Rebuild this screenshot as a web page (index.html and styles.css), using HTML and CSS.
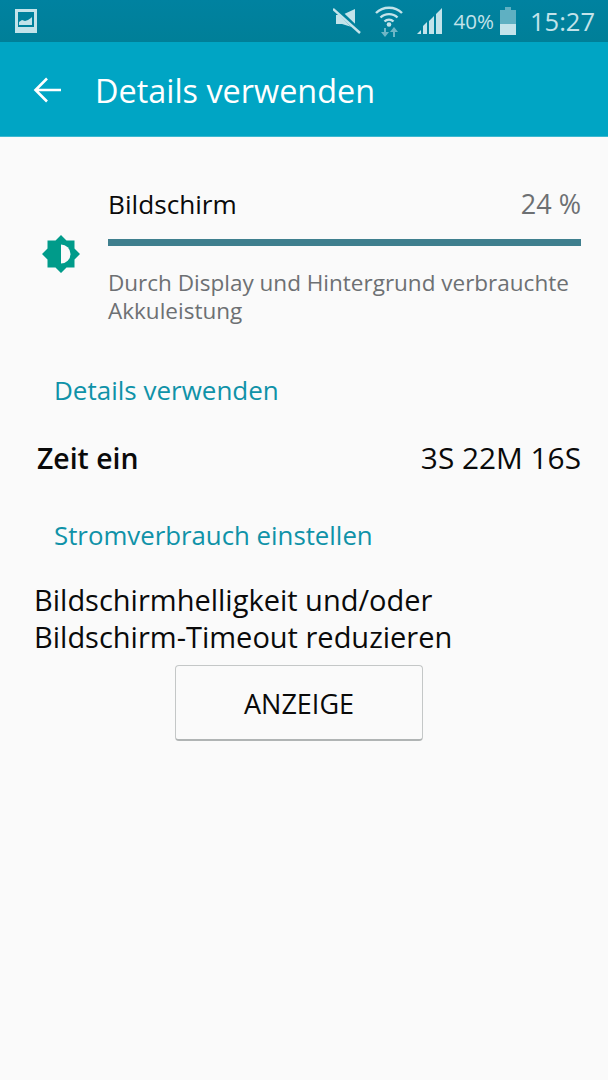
FILE: index.html

```html
<!DOCTYPE html>
<html lang="de">
<head>
  <meta charset="UTF-8" />
  <meta name="viewport" content="width=device-width, initial-scale=1.0"/>
  <title>Details verwenden</title>
  <link rel="stylesheet" href="styles.css">
</head>
<body>

  <!-- STATUSLEISTE -->
  <div class="statusbar">
    <svg class="pic-icon" width="24" height="26" viewBox="0 0 24 26">
      <path fill="#c3e3ea" fill-rule="evenodd" d="M1 1h22v24H1zM4 4v15h16V4z"/>
      <path fill="#c3e3ea" d="M5 17v-3l3-2 3 1 3-1 3-2 1-1v8z"/>
    </svg>
    <div class="status-right">
      <svg class="mute" width="28" height="26" viewBox="0 0 28 26">
        <path fill="#c3e3ea" d="M3 7h6l13-6v19L9 16H3z"/>
        <path stroke="#00829c" stroke-width="5" d="M2 0l26 25"/>
        <path stroke="#c3e3ea" stroke-width="2.400" d="M0 1l27 24"/>
      </svg>
      <svg class="wifi" width="30" height="32" viewBox="0 0 30 32">
        <g fill="none" stroke="#c3e3ea" stroke-width="2.400">
          <path d="M2 8C9 1 21 1 28 8"/>
          <path d="M6.500 12.500C11 8 19 8 23.500 12.500"/>
          <path d="M10.500 16.500C13 14 17 14 19.500 16.500"/>
        </g>
        <circle cx="15" cy="19.500" r="2.300" fill="#c3e3ea"/>
        <path fill="#6fb6c6" d="M10 23v4H7l4 5 4-5h-3v-4z"/>
        <path fill="#6fb6c6" d="M20 22l-4 5h3v5h2v-5h3z"/>
      </svg>
      <svg class="signal" width="28" height="28" viewBox="0 0 28 28">
        <path fill="#c3e3ea" d="M0 27l4-4v4zM6 27v-8l4-4v12zM12 27V14l5-5v18zM19 27V7l6-6v26z"/>
      </svg>
      <span class="pct">40%</span>
      <svg class="battery" width="18" height="28" viewBox="0 0 18 28">
        <path fill="#5fb0c2" d="M6 0h6v3h5v14H1V3h5z"/>
        <path fill="#c3e3ea" d="M1 17h16v11H1z"/>
      </svg>
      <span class="clock">15:27</span>
    </div>
  </div>

  <!-- TITEL -->
  <header class="appbar">
    <svg class="back" width="28" height="26" viewBox="0 0 28 26">
      <path fill="none" stroke="#fff" stroke-width="2.600" d="M14 1.500L2.500 13 14 24.500M3 13h25"/>
    </svg>
    <h1>Details verwenden</h1>
  </header>

  <main>
    <section class="usage">
      <svg class="sun" width="38" height="38" viewBox="0 0 38 38">
        <path fill="#009b8a" d="M19 0l5.500 5.500H32.500V13.500L38 19l-5.500 5.500V32.500H24.500L19 38l-5.500-5.500H5.500V24.500L0 19l5.500-5.500V5.500H13.500z"/>
        <path fill="#fafafa" d="M19 9.500a9.500 9.500 0 0 1 0 19z"/>
      </svg>
      <div class="usage-body">
        <div class="usage-head">
          <span class="usage-name">Bildschirm</span>
          <span class="usage-pct">24 %</span>
        </div>
        <div class="bar"></div>
        <p class="usage-desc">Durch Display und Hintergrund verbrauchte Akkuleistung</p>
      </div>
    </section>

    <h2 class="cat cat-details">Details verwenden</h2>
    <div class="time-row">
      <span class="time-label">Zeit ein</span>
      <span class="time-value">3S 22M 16S</span>
    </div>

    <h2 class="cat cat-power">Stromverbrauch einstellen</h2>
    <p class="hint">Bildschirmhelligkeit und/oder Bildschirm-Timeout reduzieren</p>
    <div class="btn-row">
      <button class="btn">ANZEIGE</button>
    </div>
  </main>

</body>
</html>
```

FILE: styles.css

```css
* {
  box-sizing: border-box;
}
html, body {
  height: 100%;
}
body {
  margin: 0;
  background: #fafafa;
  font-family: 'Open Sans', sans-serif;
  overflow: hidden;
}
svg {
  display: block;
  flex: none;
}
.statusbar {
  height: 42px;
  padding: 0 13px 0 14px;
  display: flex;
  align-items: center;
  justify-content: space-between;
  background: linear-gradient(#0082a0, #007f98);
}
.pic-icon {
  margin-top: -1px;
}
.status-right {
  display: flex;
  align-items: center;
  color: #c3e3ea;
}
.mute {
  margin-right: 13px;
}
.wifi {
  margin-right: 13px;
}
.signal {
  margin-right: 9px;
}
.pct {
  font-size: 20.5px;
  margin-right: 5px;
}
.battery {
  margin-right: 13px;
}
.clock {
  font-size: 25.5px;
}
.back {
  margin: 3px 0 0 -1px;
}
.appbar {
  height: 95px;
  padding: 0 0 2px 34px;
  display: flex;
  align-items: center;
  background: #00a5c4;
  border-bottom: 1px solid #3db8d0;
}
.appbar h1 {
  margin: 3px 0 0 34px;
  font-size: 32.4px;
  font-weight: 400;
  color: #fff;
}
main {
  padding: 0 27px 0 34px;
}
.usage {
  margin-top: 49px;
  display: flex;
  align-items: center;
}
.sun {
  margin: 0 28px 4px 8px;
}
.usage-body {
  flex: 1;
}
.usage-head {
  display: flex;
  justify-content: space-between;
  align-items: baseline;
  line-height: 36px;
}
.usage-name {
  font-size: 26.2px;
  color: #0a0a0a;
}
.usage-pct {
  font-size: 27px;
  color: #6d7073;
}
.bar {
  height: 7px;
  margin-top: 17px;
  background: #3f7f8e;
}
.usage-desc {
  margin: 23px 0 0;
  font-size: 22.5px;
  line-height: 28px;
  color: #6d7073;
}
.cat {
  margin: 0;
  font-size: 26px;
  font-weight: 400;
  color: #0f92a8;
  line-height: 36px;
}
.cat-details {
  margin: 47px 0 0 20px;
}
.time-row {
  margin: 32px 0 0 3px;
  display: flex;
  justify-content: space-between;
  line-height: 36px;
  font-size: 28.4px;
  color: #0a0a0a;
}
.time-value {
  font-size: 29.8px;
}
.time-label {
  font-weight: 600;
}
.cat-power {
  margin: 41px 0 0 20px;
  font-size: 25.8px;
}
.hint {
  margin: 28px 0 0;
  font-size: 29px;
  line-height: 37px;
  color: #0a0a0a;
  width: 500px;
}
.btn-row {
  margin-top: 10px;
  padding-left: 141px;
}
.btn {
  width: 248px;
  height: 76px;
  padding-top: 3px;
  background: #fafafa;
  border: 1px solid #c4c7c7;
  border-bottom: 2px solid #b0b4b4;
  border-radius: 4px;
  font-family: inherit;
  font-size: 27px;
  color: #0a0a0a;
}
```
